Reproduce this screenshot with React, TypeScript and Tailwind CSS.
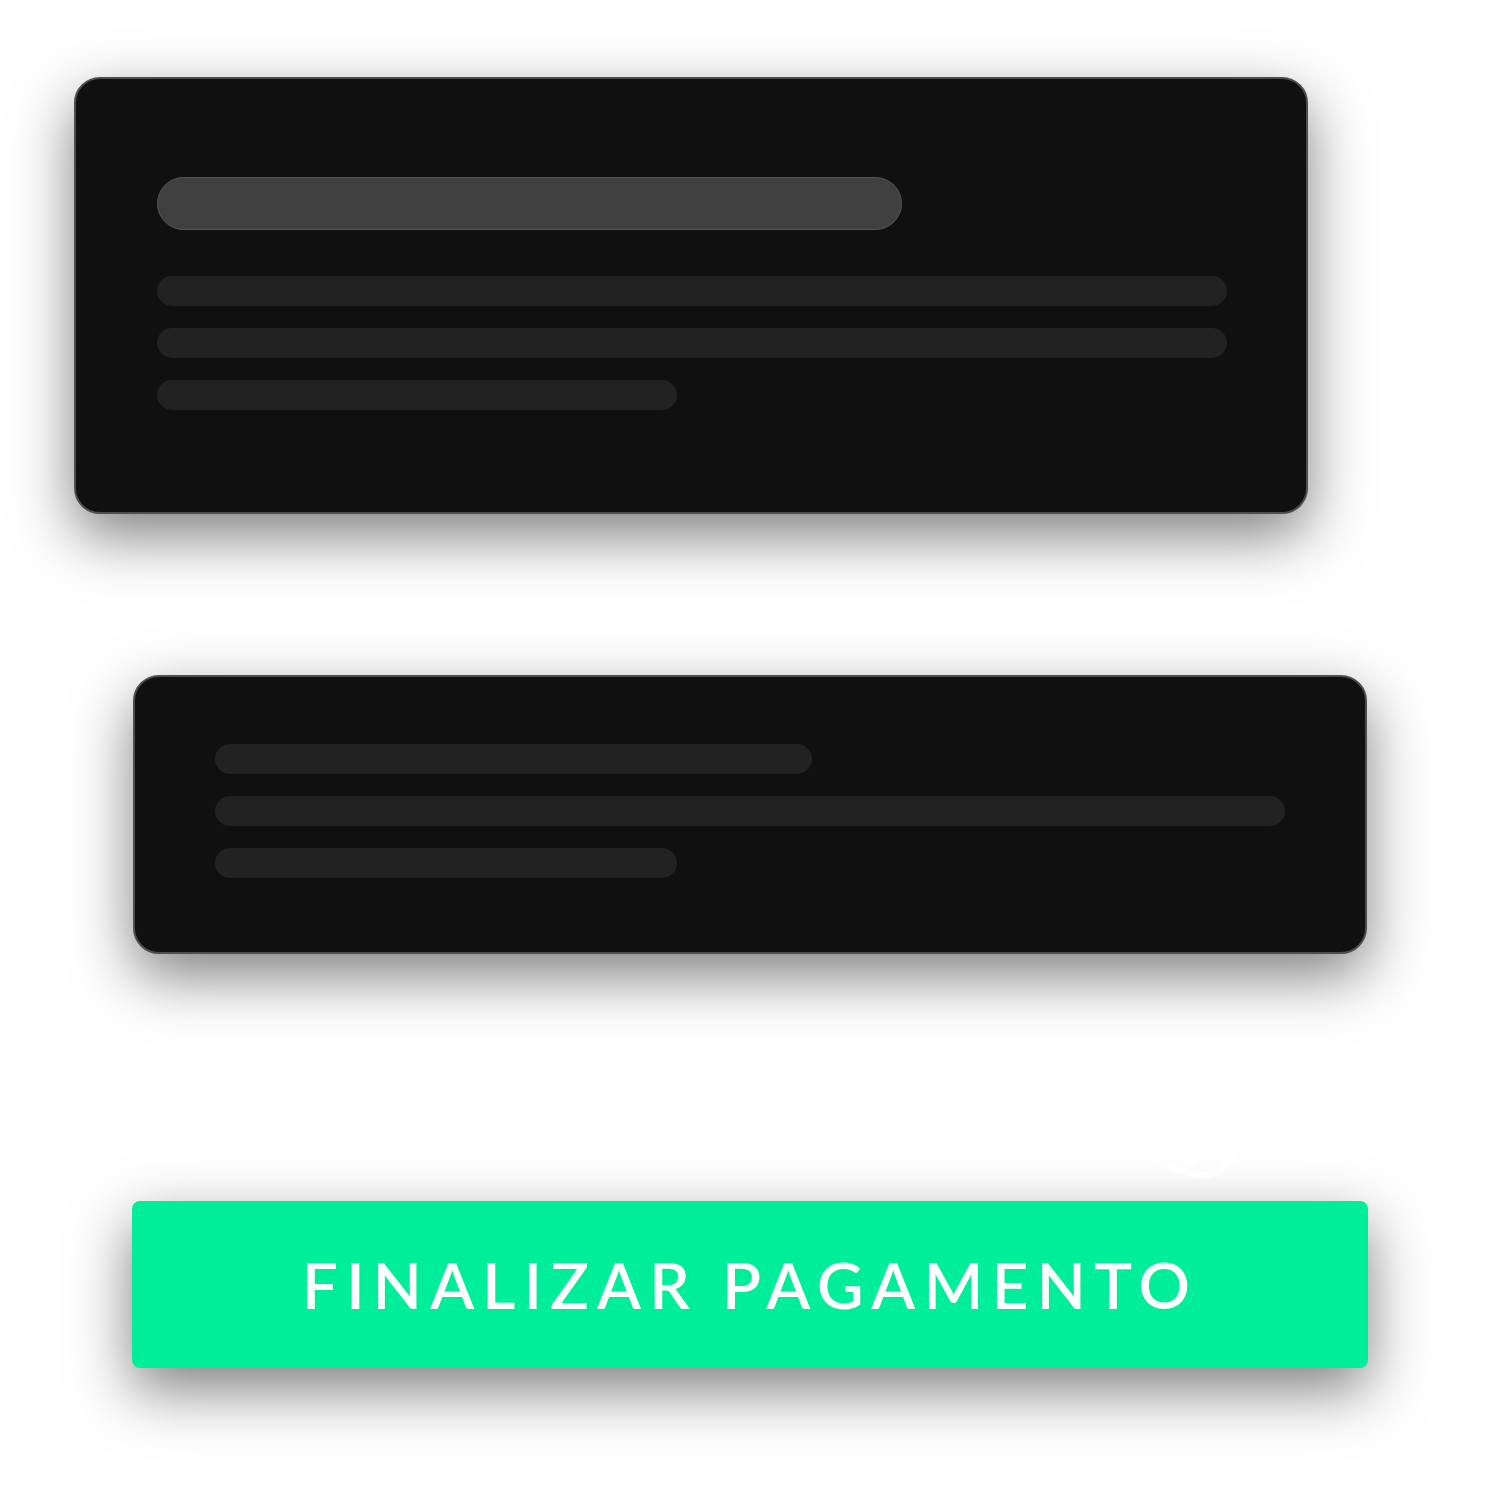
export default function App() {
  return (
    <div className="relative min-h-[1500px] w-[1500px] bg-white pt-[77px]">
      {/* summary card */}
      <div className="ml-[74px] h-[437px] w-[1234px] rounded-[26px] border-2 border-[#4d4d4d] bg-[#101010] pl-[81px] pr-[79px] pt-[98px] shadow-[0_22px_60px_rgba(0,0,0,0.5)]">
        <div className="h-[53px] w-[745px] rounded-full border border-[#555] bg-[#404040]" />
        <div className="mt-[46px] flex flex-col gap-[22px]">
          <div className="h-[30px] w-full rounded-full bg-[#222]" />
          <div className="h-[30px] w-full rounded-full bg-[#222]" />
          <div className="h-[30px] w-[520px] rounded-full bg-[#222]" />
        </div>
      </div>

      {/* details card */}
      <div className="ml-[133px] mt-[161px] h-[279px] w-[1234px] rounded-[26px] border-2 border-[#4d4d4d] bg-[#101010] px-[80px] pt-[67px] shadow-[0_22px_60px_rgba(0,0,0,0.5)]">
        <div className="flex flex-col gap-[22px]">
          <div className="h-[30px] w-[597px] rounded-full bg-[#222]" />
          <div className="h-[30px] w-full rounded-full bg-[#222]" />
          <div className="h-[30px] w-[462px] rounded-full bg-[#222]" />
        </div>
      </div>

      <button className="ml-[132px] mt-[247px] flex h-[167px] w-[1236px] items-center justify-center rounded-[8px] bg-[#00ee99] text-[64px] font-semibold uppercase tracking-[0.128em] text-white shadow-[0_22px_60px_rgba(0,0,0,0.5)] [font-family:Lato,'Open_Sans',sans-serif]">
        Finalizar pagamento
      </button>

      {/* pointer hint peeking above the button */}
      <svg
        className="absolute left-[1150px] top-[1135px] h-[55px] w-[100px] blur-[1px]"
        viewBox="0 0 100 55"
        fill="none"
      >
        <path
          d="M12 24 C14 30 30 36 48 40 C62 42 78 34 86 14"
          stroke="#fff"
          strokeWidth="6"
          strokeLinecap="round"
        />
        <path d="M20 22 C28 26 36 28 44 28" stroke="#fff" strokeWidth="4" strokeLinecap="round" />
      </svg>
    </div>
  );
}
